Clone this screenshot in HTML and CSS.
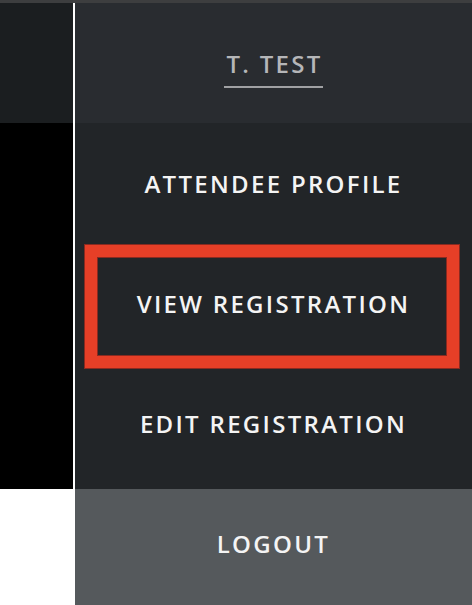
FILE: index.html
```html
<!DOCTYPE html>
<html lang="en">
<head>
<meta charset="utf-8">
<title>Account menu</title>
<link rel="stylesheet" href="styles.css">
</head>
<body>
<div class="topbar"></div>
<div class="layout">
  <div class="side">
    <div class="side-top"></div>
    <div class="side-mid"></div>
    <div class="side-bottom"></div>
  </div>
  <div class="divider"></div>
  <nav class="panel">
    <div class="user-row"><span class="user">T. TEST</span></div>
    <a class="item">ATTENDEE PROFILE</a>
    <a class="item item-view">VIEW REGISTRATION<span class="highlight"></span></a>
    <a class="item item-edit">EDIT REGISTRATION</a>
    <a class="item logout">LOGOUT</a>
  </nav>
</div>
</body>
</html>
```

FILE: styles.css
```css
html, body {
  margin: 0;
  padding: 0;
  background: #ffffff;
}
body {
  width: 472px;
  height: 605px;
  overflow: hidden;
  font-family: "Open Sans", "Liberation Sans", sans-serif;
}
.topbar {
  height: 3px;
  background: #3d3e3f;
}
.layout {
  display: flex;
  height: 602px;
}
.side {
  width: 73px;
  display: flex;
  flex-direction: column;
}
.side-top {
  height: 120px;
  background: #1b1e20;
}
.side-mid {
  height: 366px;
  background: #000000;
}
.side-bottom {
  flex: 1;
  background: #ffffff;
}
.divider {
  width: 2px;
  background: #ffffff;
}
.panel {
  flex: 1;
  display: flex;
  flex-direction: column;
  background: #222528;
}
.user-row {
  height: 120px;
  background: #292c30;
  display: flex;
  align-items: center;
  justify-content: center;
}
.user {
  color: #b5b6b8;
  font-size: 24px;
  font-weight: 600;
  letter-spacing: 2.3px;
  padding-bottom: 7px;
  border-bottom: 2px solid #a0a1a3;
  line-height: 30px;
  margin-top: 10px;
  padding-left: 2px;
}
.item {
  position: relative;
  height: 120px;
  display: flex;
  align-items: center;
  justify-content: center;
  color: #f4f4f4;
  font-size: 24px;
  font-weight: 600;
  letter-spacing: 2.3px;
  text-decoration: none;
}
.item-edit {
  height: 126px;
  padding-bottom: 6px;
  box-sizing: border-box;
}
.logout {
  flex: 1;
  height: auto;
  background: #55595c;
  padding-bottom: 8px;
}
.highlight {
  position: absolute;
  left: 10px;
  right: 13px;
  top: 2px;
  height: 123px;
  box-sizing: border-box;
  border: 12px solid #e63f27;
  box-shadow: 0 0 0 1px #8a2a20 inset, 0 0 0 1px #8a2a20;
  pointer-events: none;
}
```
